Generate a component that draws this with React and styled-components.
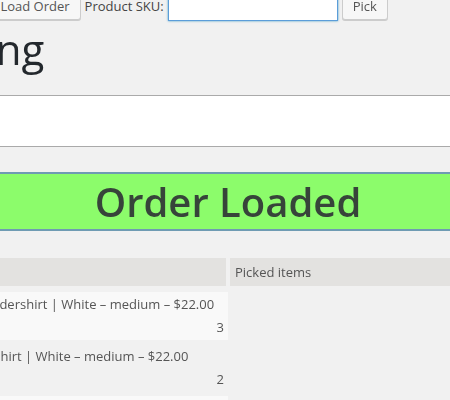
import React from "react";
import styled, { createGlobalStyle } from "styled-components";

const GlobalStyle = createGlobalStyle`
  html, body {
    margin: 0;
    padding: 0;
    overflow: hidden;
    background: #f1f1f1;
  }
  body {
    font-family: "Open Sans", "Noto Sans", sans-serif;
    font-size: 13px;
    color: #444;
  }
`;

const Viewport = styled.div`
  width: 100%;
  overflow: hidden;
`;

const Content = styled.div`
  width: 656px;
  margin-left: -100px;
  display: flex;
  flex-direction: column;
`;

const Toolbar = styled.div`
  display: flex;
  align-items: center;
  gap: 4px;
  height: 30px;
  margin-top: -9px;
`;

const Label = styled.label`
  font-size: 13px;
  line-height: 1.4;
  color: #444;
  white-space: nowrap;
`;

const TextInput = styled.input`
  box-sizing: border-box;
  width: ${(p) => p.$w}px;
  height: 29px;
  margin: 0;
  padding: 3px 5px;
  font: 13px "Open Sans", sans-serif;
  color: #333;
  background: #fff;
  border: 1px solid ${(p) => (p.$active ? "#5b9dd9" : "#ddd")};
  box-shadow: ${(p) =>
    p.$active
      ? "0 0 2px rgba(30, 140, 190, 0.8)"
      : "inset 0 1px 2px rgba(0, 0, 0, 0.07)"};
  outline: none;
`;

const Button = styled.button`
  box-sizing: border-box;
  height: 28px;
  margin: 0;
  padding: 0 10px 1px;
  font: 13px/26px "Open Sans", sans-serif;
  color: #555;
  background: #f7f7f7;
  border: 1px solid #ccc;
  border-radius: 3px;
  box-shadow: 0 1px 0 #ccc;
  white-space: nowrap;
  cursor: pointer;
`;

const Title = styled.h1`
  margin: 1px 0 0;
  padding-left: 7px;
  font-size: 42px;
  font-weight: 400;
  line-height: 1.3;
  color: #23282d;
  white-space: nowrap;
`;

const Notes = styled.div`
  height: 50px;
  margin-top: 18px;
  background: #fff;
  border-top: 1px solid #aaa;
  border-bottom: 1px solid #aaa;
`;

const Notice = styled.div`
  margin-top: 25px;
  height: 54px;
  background: #8cfc6b;
  border-top: 2px solid #6f9bb3;
  border-bottom: 2px solid #6f9bb3;
  text-align: center;
  font-size: 40px;
  font-weight: 600;
  line-height: 54px;
  padding-top: 1px;
  box-sizing: content-box;
  color: #37443a;
`;

const Columns = styled.div`
  display: grid;
  grid-template-columns: 328px 1fr;
  gap: 2px;
  margin-top: 27px;
`;

const Column = styled.div`
  display: flex;
  flex-direction: column;
`;

const ColHead = styled.div`
  height: 28px;
  box-sizing: border-box;
  padding: 5px 5px;
  margin-right: ${(p) => (p.$inset ? 2 : 0)}px;
  background: #e3e2e0;
  font-size: 13px;
  line-height: 18px;
  color: #555;
`;

const ItemList = styled.div`
  display: flex;
  flex-direction: column;
  gap: 4px;
  margin-top: 6px;
`;

const Item = styled.div`
  display: flex;
  flex-direction: column;
  gap: 5px;
  height: 48px;
  box-sizing: border-box;
  padding: 3px 4px 4px 10px;
  background: ${(p) => (p.$odd ? "#f9f9f9" : "transparent")};
  font-size: 13px;
  line-height: 18px;
  color: #555;
`;

const ItemName = styled.div`
  white-space: nowrap;
`;

const ItemQty = styled.div`
  text-align: right;
`;

const items = [
  { name: "Men's Tank Undershirt | White – medium – $22.00", qty: 3 },
  { name: "Men's Tank T-Shirt | White – medium – $22.00", qty: 2 },
  { name: "Men's Tank Undershirt | Black – large – $22.00", qty: 1 },
];

export default function App() {
  return (
    <>
      <GlobalStyle />
      <Viewport>
        <Content>
          <Toolbar>
            <Label>Order:</Label>
            <TextInput $w={42} />
            <Button>Load Order</Button>
            <Label>Product SKU:</Label>
            <TextInput $w={170} $active autoFocus />
            <Button>Pick</Button>
          </Toolbar>
          <Title>Picking</Title>
          <Notes />
          <Notice>Order Loaded</Notice>
          <Columns>
            <Column>
              <ColHead $inset>Order items</ColHead>
              <ItemList>
                {items.map((it, i) => (
                  <Item key={i} $odd={i % 2 === 0}>
                    <ItemName>{it.name}</ItemName>
                    <ItemQty>{it.qty}</ItemQty>
                  </Item>
                ))}
              </ItemList>
            </Column>
            <Column>
              <ColHead>Picked items</ColHead>
            </Column>
          </Columns>
        </Content>
      </Viewport>
    </>
  );
}
